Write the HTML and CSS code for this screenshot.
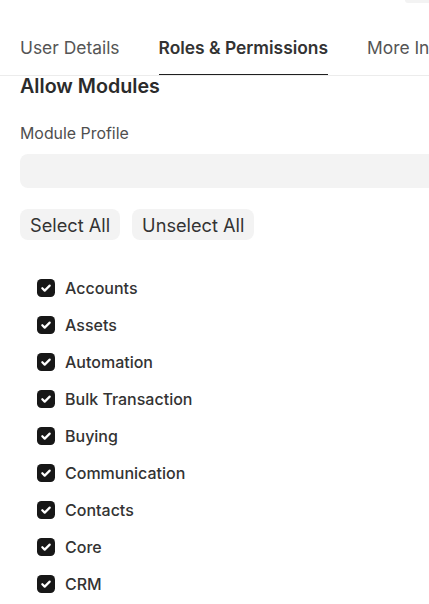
FILE: index.html
```html
<!DOCTYPE html>
<html>
<head>
<meta charset="utf-8">
<link rel="stylesheet" href="styles.css">
</head>
<body>
<div class="page">
  <div class="topbar"><div class="search"></div></div>
  <nav class="tabs">
    <div class="tab">User Details</div>
    <div class="tab active">Roles &amp; Permissions</div>
    <div class="tab">More Info</div>
  </nav>
  <section class="section">
    <h2 class="title">Allow Modules</h2>
    <div class="field">
      <label class="label">Module Profile</label>
      <div class="input"></div>
    </div>
    <div class="buttons">
      <button class="btn">Select All</button>
      <button class="btn">Unselect All</button>
    </div>
    <ul class="modules">
      <li class="module"><span class="check"><svg viewBox="0 0 18 18" width="18" height="18"><path d="M5.3 9.2l2.4 2.4 5-5" fill="none" stroke="#fff" stroke-width="2.2" stroke-linecap="round" stroke-linejoin="round"/></svg></span>Accounts</li>
      <li class="module"><span class="check"><svg viewBox="0 0 18 18" width="18" height="18"><path d="M5.3 9.2l2.4 2.4 5-5" fill="none" stroke="#fff" stroke-width="2.2" stroke-linecap="round" stroke-linejoin="round"/></svg></span>Assets</li>
      <li class="module"><span class="check"><svg viewBox="0 0 18 18" width="18" height="18"><path d="M5.3 9.2l2.4 2.4 5-5" fill="none" stroke="#fff" stroke-width="2.2" stroke-linecap="round" stroke-linejoin="round"/></svg></span>Automation</li>
      <li class="module"><span class="check"><svg viewBox="0 0 18 18" width="18" height="18"><path d="M5.3 9.2l2.4 2.4 5-5" fill="none" stroke="#fff" stroke-width="2.2" stroke-linecap="round" stroke-linejoin="round"/></svg></span>Bulk Transaction</li>
      <li class="module"><span class="check"><svg viewBox="0 0 18 18" width="18" height="18"><path d="M5.3 9.2l2.4 2.4 5-5" fill="none" stroke="#fff" stroke-width="2.2" stroke-linecap="round" stroke-linejoin="round"/></svg></span>Buying</li>
      <li class="module"><span class="check"><svg viewBox="0 0 18 18" width="18" height="18"><path d="M5.3 9.2l2.4 2.4 5-5" fill="none" stroke="#fff" stroke-width="2.2" stroke-linecap="round" stroke-linejoin="round"/></svg></span>Communication</li>
      <li class="module"><span class="check"><svg viewBox="0 0 18 18" width="18" height="18"><path d="M5.3 9.2l2.4 2.4 5-5" fill="none" stroke="#fff" stroke-width="2.2" stroke-linecap="round" stroke-linejoin="round"/></svg></span>Contacts</li>
      <li class="module"><span class="check"><svg viewBox="0 0 18 18" width="18" height="18"><path d="M5.3 9.2l2.4 2.4 5-5" fill="none" stroke="#fff" stroke-width="2.2" stroke-linecap="round" stroke-linejoin="round"/></svg></span>Core</li>
      <li class="module"><span class="check"><svg viewBox="0 0 18 18" width="18" height="18"><path d="M5.3 9.2l2.4 2.4 5-5" fill="none" stroke="#fff" stroke-width="2.2" stroke-linecap="round" stroke-linejoin="round"/></svg></span>CRM</li>
    </ul>
  </section>
</div>
</body>
</html>
```

FILE: styles.css
```css
html, body {
  margin: 0;
  padding: 0;
  overflow: hidden;
  background: #fff;
}
body {
  font-family: Inter, "Noto Sans", sans-serif;
  color: #333;
}
.page {
  width: 640px;
}
.topbar {
  height: 20px;
  display: flex;
}
.search {
  width: 235px;
  height: 3px;
  margin-left: 405px;
  background: #f3f3f3;
  border-radius: 0 0 0 8px;
}
.tabs {
  display: flex;
  gap: 39px;
  padding: 0 20px;
  border-bottom: 1px solid #ececec;
  height: 55px;
}
.tab {
  font-size: 17.4px;
  color: #555;
  line-height: 22px;
  padding-top: 17px;
  box-sizing: border-box;
  height: 55px;
  white-space: nowrap;
}
.tab.active {
  color: #333;
  font-weight: 600;
  border-bottom: 1.5px solid #1f1f1f;
}
.section {
  padding: 0 20px;
}
.title {
  margin: 0;
  font-size: 19.7px;
  font-weight: 600;
  line-height: 20px;
  color: #2b2b2b;
}
.field {
  margin-top: 28px;
}
.label {
  display: block;
  font-size: 15.9px;
  color: #4f4f4f;
  line-height: 20px;
}
.input {
  margin-top: 10px;
  height: 34px;
  background: #f3f3f3;
  border-radius: 8px;
}
.buttons {
  display: flex;
  gap: 12px;
  margin-top: 21px;
}
.btn {
  font-family: inherit;
  font-size: 18.2px;
  color: #333;
  background: #f3f3f3;
  border: none;
  border-radius: 8px;
  height: 31px;
  padding: 0 10px;
}
.modules {
  list-style: none;
  margin: 30px 0 0;
  padding: 0 0 0 17px;
}
.module {
  display: flex;
  align-items: center;
  gap: 10px;
  font-size: 16px;
  font-weight: 500;
  color: #333;
  height: 36.9px;
}
.check {
  width: 18px;
  height: 18px;
  background: #171717;
  border-radius: 4.5px;
  display: flex;
}
```
